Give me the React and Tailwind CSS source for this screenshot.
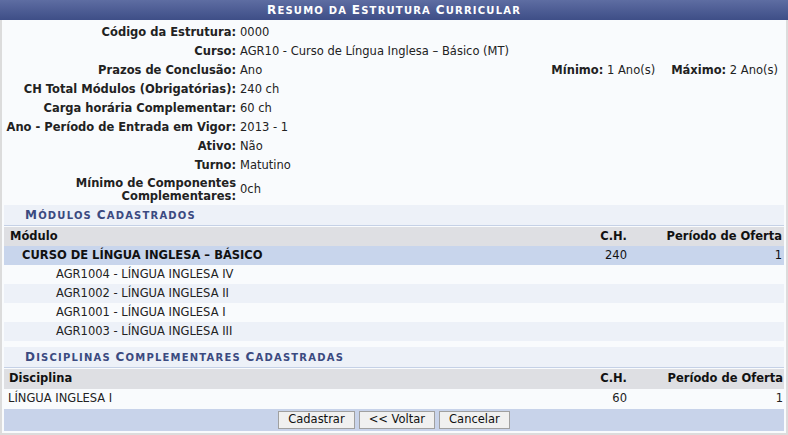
import React from "react";

const F = { fontFamily: '"DejaVu Sans", Verdana, sans-serif' };

function SmallCaps({ text, big, small }) {
  const chars = text.split("");
  const out = [];
  let buf = "";
  let bufBig = null;
  const flush = () => {
    if (buf) out.push(<span key={out.length} className={bufBig ? big : small}>{buf.toUpperCase()}</span>);
    buf = "";
  };
  chars.forEach((c) => {
    const isBig = c !== " " && c === c.toUpperCase() && c !== c.toLowerCase();
    const kind = c === " " ? bufBig : isBig;
    if (bufBig !== null && kind !== bufBig) flush();
    bufBig = kind;
    buf += c;
  });
  flush();
  return <>{out}</>;
}

function Field({ label, value, extra, twoLine }) {
  return (
    <div className={`grid grid-cols-[236px_1fr] items-center ${twoLine ? "h-[29px]" : "h-[19px]"}`}>
      <div className="text-right font-bold leading-[13px] pr-[4px] text-[#222]">{label}</div>
      <div className="flex items-center text-[#222]">
        <span>{value}</span>
        {extra}
      </div>
    </div>
  );
}

function Section({ title }) {
  return (
    <div className="h-[21px] bg-[#edf1f8] border-b border-[#c5d1e6] flex items-center pl-[21px] text-[#3b4a80] font-bold tracking-[1.2px] leading-none">
      <span>
        <SmallCaps text={title} big="text-[12px]" small="text-[10px]" />
      </span>
    </div>
  );
}

export default function App() {
  return (
    <div style={F} className="w-[788px] h-[435px] text-[11.5px] bg-[#f9fbfd] border-l-2 border-r-2 border-b-2 border-[#dcdcdc] flex flex-col">
      <div className="h-[20px] bg-gradient-to-b from-[#5e6da2] to-[#3e4e87] text-white font-bold tracking-[1.2px] -mx-[2px] flex items-center justify-center leading-none">
        <span className="pt-[1px]">
          <SmallCaps text="Resumo da Estrutura Curricular" big="text-[12px]" small="text-[10px]" />
        </span>
      </div>
      <div className="px-[2px] flex flex-col">
        <div className="pt-[3px]">
          <Field label="Código da Estrutura:" value="0000" />
          <Field label="Curso:" value="AGR10 - Curso de Língua Inglesa – Básico (MT)" />
          <Field
            label="Prazos de Conclusão:"
            value="Ano"
            extra={
              <div className="ml-auto flex pr-[6px]">
                <span><b>Mínimo:</b> 1 Ano(s)</span>
                <span className="ml-[16px]"><b>Máximo:</b> 2 Ano(s)</span>
              </div>
            }
          />
          <Field label="CH Total Módulos (Obrigatórias):" value="240 ch" />
          <Field label="Carga horária Complementar:" value="60 ch" />
          <Field label="Ano - Período de Entrada em Vigor:" value="2013 - 1" />
          <Field label="Ativo:" value="Não" />
          <Field label="Turno:" value="Matutino" />
          <Field label={<>Mínimo de Componentes<br />Complementares:</>} value="0ch" twoLine />
        </div>

        <div className="mt-[1px]">
          <Section title="Módulos Cadastrados" />
          <div className="h-[19px] bg-[#dedfe3] flex items-center font-bold text-[#111] mt-[1px]">
            <div className="flex-1 pl-[6px]">Módulo</div>
            <div className="w-[60px] text-right">C.H.</div>
            <div className="w-[157px] text-right pr-[2px]">Período de Oferta</div>
          </div>
          <div className="h-[19px] bg-[#c8d5ec] flex items-center text-[#111]">
            <div className="flex-1 pl-[18px] font-bold">CURSO DE LÍNGUA INGLESA – BÁSICO</div>
            <div className="w-[60px] text-right">240</div>
            <div className="w-[157px] text-right pr-[2px]">1</div>
          </div>
          {[
            "AGR1004 - LÍNGUA INGLESA IV",
            "AGR1002 - LÍNGUA INGLESA II",
            "AGR1001 - LÍNGUA INGLESA I",
            "AGR1003 - LÍNGUA INGLESA III",
          ].map((t, i) => (
            <div key={t} className={`h-[19px] flex items-center pl-[52px] text-[#222] ${i % 2 ? "bg-[#edf1f8]" : "bg-[#f9fbfd]"}`}>
              {t}
            </div>
          ))}
        </div>

        <div className="mt-[6px]">
          <Section title="Disciplinas Complementares Cadastradas" />
          <div className="h-[20px] bg-[#dedfe3] flex items-center font-bold text-[#111] mt-[1px]">
            <div className="flex-1 pl-[5px]">Disciplina</div>
            <div className="w-[60px] text-right">C.H.</div>
            <div className="w-[157px] text-right pr-[1px]">Período de Oferta</div>
          </div>
          <div className="h-[20px] flex items-center text-[#222]">
            <div className="flex-1 pl-[4px]">LÍNGUA INGLESA I</div>
            <div className="w-[60px] text-right">60</div>
            <div className="w-[157px] text-right pr-[1px]">1</div>
          </div>
          <div className="h-[22px] bg-[#c8d3ea] flex items-center justify-center gap-[4px]">
            {["Cadastrar", "<< Voltar", "Cancelar"].map((b) => (
              <button key={b} style={F} className="h-[18px] px-[9px] text-[11.5px] bg-[#f0f0f0] border border-[#a0a0a0] text-[#111] leading-none">
                {b}
              </button>
            ))}
          </div>
        </div>
      </div>
    </div>
  );
}
